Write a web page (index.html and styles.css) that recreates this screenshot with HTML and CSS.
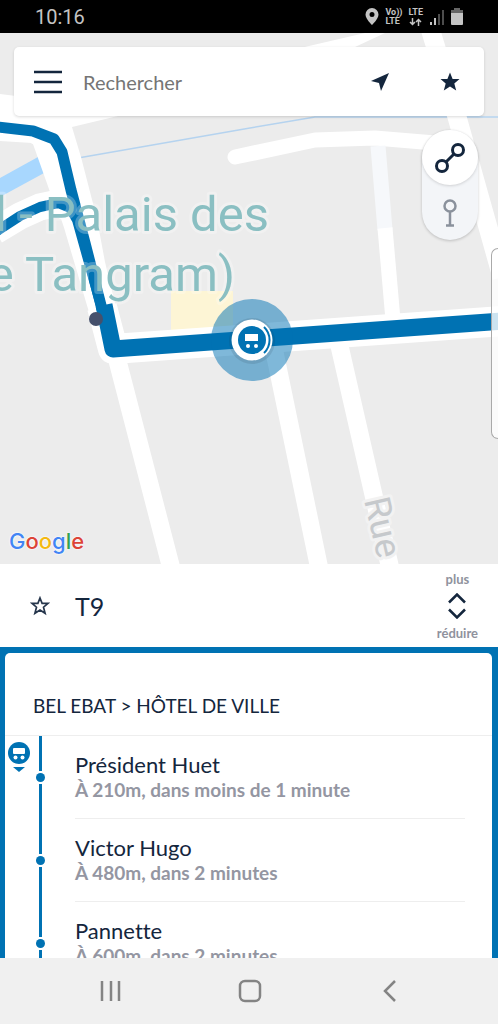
FILE: index.html
```html
<!DOCTYPE html>
<html lang="fr">
<head>
    <meta charset="UTF-8">
    <meta name="viewport" content="width=device-width, initial-scale=1.0">
    <title>Ligne T9</title>
    <link rel="stylesheet" href="styles.css">
</head>
<body>
    <!-- Barre d'état -->
    <div class="status-bar">
        <span class="clock">10:16</span>
        <div class="status-icons">
            <svg width="14" height="17" viewBox="0 0 14 17"><path fill="#c4c4c4" fill-rule="evenodd" d="M7 0a6.500 6.500 0 0 0-6.500 6.500C.5 11 7 17 7 17s6.500-6 6.500-10.500A6.500 6.500 0 0 0 7 0zm0 4a2.500 2.500 0 1 1 0 5 2.500 2.500 0 0 1 0-5z"/></svg>
            <span class="network">Vo))<br>LTE</span>
            <span class="network">LTE
                <svg width="13" height="8" viewBox="0 0 13 8" fill="none" stroke="#c4c4c4" stroke-width="1.500"><path d="M3.500 0v6.500M1 4l2.500 2.500L6 4M9.500 8V1.500M7 4l2.500-2.500L12 4"/></svg>
            </span>
            <svg class="signal" width="16" height="16" viewBox="0 0 16 16"><path fill="#c4c4c4" d="M1 13h2v3H1zM5 9h2v7H5z"/><path fill="#4d4d4d" d="M9 5h2v11H9zM13 1h2v15h-2z"/></svg>
            <svg width="12" height="17" viewBox="0 0 12 17"><path fill="#666" d="M3 0h6v2h3v4H0V2h3z"/><path fill="#c4c4c4" d="M0 5h12v11a1 1 0 0 1-1 1H1a1 1 0 0 1-1-1z"/></svg>
        </div>
    </div>

    <!-- Carte -->
    <main class="map">
        <svg class="map-canvas" viewBox="0 33 498 531" preserveAspectRatio="xMidYMid slice">
            <rect x="-500" y="33" width="1500" height="531" fill="#ececec"/>
            <rect x="171" y="291" width="62" height="50" fill="#fdf5d5"/>
            <path fill="#a8d7fe" d="M0 178l47-26 10 14L0 197z"/>
            <path fill="none" stroke="#b5d3ef" stroke-width="1.500" d="M78 158l172-30 65-11h183"/>
            <!-- rues -->
            <path fill="#fff" d="M0 94l16 2 34 10 315-73h20l-30 14-237 69-46 11 9 30 16 62 8 43 20 83-17 1-20-50-21-74-12-16-22-62-10-7-33-6z"/>
            <g fill="none" stroke="#fff">
                <path stroke-width="20" d="M0 131l33 2 18 8 8 15"/>
                <path stroke-width="27" d="M-5 231l25-15 20-9 18-4 14 6 5 15 26 88"/>
                <path stroke-width="19" d="M429 25l28 92 45 160"/>
                <path stroke-width="15" stroke-linecap="round" stroke-linejoin="round" d="M235 157l80-17 60-2 60 5"/>
                <path stroke="#f6f8fb" stroke-width="15" d="M378 146l7 84"/>
                <path stroke-width="15" d="M385 228l8 92"/>
                <path stroke-width="18" d="M116 355l55 212M272 340l47 227M337 335l53 232"/>
                <path stroke-width="30" stroke-linejoin="round" d="M102 307l11 42 390-28"/>
            </g>
            <!-- tracé de la ligne -->
            <g fill="none" stroke="#0072b3" stroke-linejoin="round">
                <path stroke-width="11" d="M-3 127l36 4 21 8 8 13 9 38 14 53 18 70"/>
                <path stroke-width="10" d="M-3 231l23-15 20-9 18-4 12 5 7 12 26 93"/>
                <path stroke-width="17" d="M104 305l9 44 390-28"/>
            </g>
            <circle cx="96" cy="319" r="7" fill="#45506c"/>
            <g class="place-name">
                <text x="269" y="231" text-anchor="end">l - Palais des</text>
                <text x="235" y="291" text-anchor="end">e Tangram)</text>
            </g>
            <text class="street-name" transform="translate(364 500) rotate(77)">Rue</text>
            <!-- tram -->
            <circle cx="252" cy="340" r="41" fill="#0072b3" fill-opacity=".5"/>
            <circle cx="252" cy="341" r="23" fill="#234" fill-opacity=".12"/>
            <circle cx="252" cy="340" r="20.500" fill="#fff"/>
            <circle cx="252" cy="340" r="14" fill="#0072b3"/>
            <path fill="none" stroke="#0072b3" stroke-width="2" d="M264 327a18 18 0 0 1 0 26"/>
            <path fill="#fff" d="M245 334h13v7h-13z"/>
            <circle cx="248" cy="346" r="2" fill="#fff"/>
            <circle cx="256" cy="346" r="2" fill="#fff"/>
        </svg>

        <form class="search-bar">
            <button type="button" class="menu-btn" aria-label="Menu">
                <svg width="28" height="24" viewBox="0 0 28 24" stroke="#14263d" stroke-width="2.500"><path d="M0 2h28M0 12h28M0 22h28"/></svg>
            </button>
            <input type="text" class="search-input" placeholder="Rechercher" aria-label="Rechercher">
            <button type="button" class="search-btn" aria-label="Ma position">
                <svg width="18" height="18" viewBox="0 0 18 18" fill="#14263d"><path d="M18 0L10 18 8 10 0 8z"/></svg>
            </button>
            <button type="button" class="search-btn" aria-label="Favoris">
                <svg width="20" height="20" viewBox="0 0 20 20" fill="#14263d"><path d="M10 .5l2.600 6.500h6.900l-5.200 4.400 1.900 7.100L10 14.600l-6.200 3.900 1.900-7.100L.5 7h6.900z"/></svg>
            </button>
        </form>

        <div class="view-switch">
            <button type="button" class="view-btn active" aria-label="Lignes">
                <svg width="32" height="32" viewBox="0 0 32 32" fill="none" stroke="#14263d" stroke-width="3"><circle cx="24" cy="8" r="5.500"/><circle cx="8" cy="24" r="5.500"/><path d="M12 20l8-8"/></svg>
            </button>
            <button type="button" class="view-btn" aria-label="Arrêts">
                <svg width="16" height="28" viewBox="0 0 16 28" fill="none" stroke="#8a919c" stroke-width="2.500"><circle cx="8" cy="7" r="5.500"/><path d="M8 12v14M4 26.500h8"/></svg>
            </button>
        </div>

        <div class="edge-handle"></div>

        <a class="google" href="#"><span class="blue">G</span><span class="red">o</span><span class="yellow">o</span><span class="blue">g</span><span class="green">l</span><span class="red">e</span></a>
    </main>

    <!-- Ligne -->
    <header class="line-header">
        <button type="button" class="fav-btn" aria-label="Ajouter aux favoris">
            <svg width="20" height="20" viewBox="0 0 20 20" fill="none" stroke="#26364c" stroke-width="1.700"><path d="M10 2l2.100 5.400h5.900l-4.500 3.800 1.600 6.100-5.100-3.300-5.100 3.300 1.600-6.100L2 7.400h5.900z"/></svg>
        </button>
        <h1>T9</h1>
        <button type="button" class="resize-btn">
            <span>plus</span>
            <svg width="18" height="26" viewBox="0 0 18 26" fill="none" stroke="#14263d" stroke-width="2.500"><path d="M1 9.500l8-8 8 8M1 16.500l8 8 8-8"/></svg>
            <span>réduire</span>
        </button>
    </header>

    <!-- Arrêts -->
    <section class="directions">
        <div class="direction">
            <h2>BEL EBAT &gt; HÔTEL DE VILLE</h2>
            <ul class="stops">
                <li class="stop">
                    <svg class="vehicle" width="22" height="38" viewBox="0 0 22 38">
                        <circle cx="11" cy="11" r="11" fill="#0072b3"/>
                        <rect x="5" y="6" width="12" height="6" rx="1" fill="#fff"/>
                        <circle cx="7.500" cy="15.500" r="2" fill="#fff"/>
                        <circle cx="14.500" cy="15.500" r="2" fill="#fff"/>
                        <path fill="#0072b3" d="M5 25h12l-6 5z"/>
                    </svg>
                    <div class="rail"><i class="rail-top"></i><i class="rail-dot"></i><i class="rail-bottom"></i></div>
                    <div class="stop-info">
                        <h3>Président Huet</h3>
                        <p>À 210m, dans moins de 1 minute</p>
                    </div>
                </li>
                <li class="stop">
                    <div class="rail"><i class="rail-top"></i><i class="rail-dot"></i><i class="rail-bottom"></i></div>
                    <div class="stop-info">
                        <h3>Victor Hugo</h3>
                        <p>À 480m, dans 2 minutes</p>
                    </div>
                </li>
                <li class="stop">
                    <div class="rail"><i class="rail-top"></i><i class="rail-dot"></i><i class="rail-bottom"></i></div>
                    <div class="stop-info">
                        <h3>Pannette</h3>
                        <p>À 600m, dans 2 minutes</p>
                    </div>
                </li>
            </ul>
        </div>
    </section>

    <!-- Navigation Android -->
    <nav class="nav-bar">
        <button type="button" aria-label="Applications récentes">
            <svg width="22" height="22" viewBox="0 0 22 22" stroke="#848484" stroke-width="2.500"><path d="M2 1v20M11 1v20M19 1v20"/></svg>
        </button>
        <button type="button" aria-label="Accueil">
            <svg width="24" height="24" viewBox="0 0 24 24" fill="none" stroke="#848484" stroke-width="2.500"><rect x="2" y="2" width="20" height="20" rx="5"/></svg>
        </button>
        <button type="button" aria-label="Retour">
            <svg width="14" height="22" viewBox="0 0 14 22" fill="none" stroke="#848484" stroke-width="2.500"><path d="M13 1L3 11l10 10"/></svg>
        </button>
    </nav>
</body>
</html>
```

FILE: styles.css
```css
* {
    box-sizing: border-box;
}
body {
    margin: 0;
    height: 100vh;
    display: flex;
    flex-direction: column;
    overflow: hidden;
    font-family: 'Lato', sans-serif;
    font-variant-ligatures: none;
    color: #14263d;
    background-color: white;
}
button {
    display: flex;
    align-items: center;
    justify-content: center;
    padding: 0;
    border: none;
    background: none;
    font-family: inherit;
    color: inherit;
    cursor: pointer;
}
svg {
    display: block;
}
h1, h2, h3, p, ul {
    margin: 0;
    padding: 0;
    font-weight: 400;
}

/* Barre d'état */
.status-bar {
    flex: none;
    height: 33px;
    padding: 0 35px;
    display: flex;
    align-items: center;
    justify-content: space-between;
    background-color: black;
    color: #c4c4c4;
    font-family: 'Roboto', sans-serif;
}
.clock {
    font-size: 20px;
}
.status-icons {
    display: flex;
    align-items: center;
    gap: 6px;
}
.network {
    font-size: 9px;
    line-height: 9px;
    font-weight: 700;
}
.network svg {
    margin: 1px auto 0;
}

/* Carte */
.map {
    flex: 1;
    min-height: 0;
    position: relative;
    overflow: hidden;
    padding: 14px;
}
.map-canvas {
    position: absolute;
    top: 0;
    left: 0;
    width: 100%;
    height: 100%;
}
.place-name {
    font-family: 'Roboto', sans-serif;
    font-size: 49px;
    fill: #8abfc2;
    stroke: rgba(255, 255, 255, 0.25);
    stroke-width: 6px;
    stroke-linejoin: round;
    paint-order: stroke;
}
.street-name {
    font-family: 'Roboto', sans-serif;
    font-size: 36px;
    fill: #c6c9cc;
    stroke: #f2f2f2;
    stroke-width: 6px;
    stroke-linejoin: round;
    paint-order: stroke;
}
.search-bar {
    position: relative;
    height: 69px;
    padding: 0 14px 0 20px;
    display: flex;
    align-items: center;
    background-color: white;
    border-radius: 5px;
    box-shadow: 0 1px 3px rgba(0, 0, 0, 0.15);
}
.search-input {
    flex: 1;
    min-width: 0;
    margin-left: 21px;
    padding: 0;
    border: none;
    outline: none;
    background: none;
    font-family: inherit;
    font-size: 20px;
    color: #14263d;
}
.search-input::placeholder {
    color: #757575;
    opacity: 1;
}
.search-btn {
    width: 40px;
    height: 40px;
    margin-left: 30px;
}
.view-switch {
    position: absolute;
    top: 97px;
    right: 20px;
    background-color: #f3f5f8;
    border-radius: 28px;
    box-shadow: 0 1px 3px rgba(0, 0, 0, 0.2);
}
.view-btn {
    width: 56px;
    height: 55px;
    border-radius: 50%;
}
.view-btn.active {
    background-color: white;
    box-shadow: 0 1px 3px rgba(0, 0, 0, 0.15);
}
.edge-handle {
    position: absolute;
    top: 215px;
    right: 0;
    width: 7px;
    height: 191px;
    background-color: rgba(255, 255, 255, 0.8);
    border: 1px solid #aaa;
    border-right: none;
    border-radius: 7px 0 0 7px;
}
.google {
    position: absolute;
    left: 9px;
    bottom: 9px;
    font-family: 'Inter', sans-serif;
    font-size: 22px;
    line-height: 28px;
    font-weight: 500;
    text-decoration: none;
    text-shadow: 0 0 2px white, 0 0 2px white;
}
.blue {
    color: #4285f4;
}
.red {
    color: #dc4437;
}
.yellow {
    color: #f4b912;
}
.green {
    color: #34a051;
}

/* Ligne */
.line-header {
    flex: none;
    height: 83px;
    padding: 0 20px 0 30px;
    display: flex;
    align-items: center;
}
.line-header h1 {
    flex: 1;
    margin-left: 25px;
    font-size: 25px;
}
.resize-btn {
    flex-direction: column;
    gap: 5px;
    font-size: 13px;
    line-height: 18px;
    font-weight: 700;
    color: #8f929d;
}

/* Arrêts */
.directions {
    flex: none;
    height: 311px;
    padding: 6px 6px 0 5px;
    overflow: hidden;
    background-color: #0072b3;
}
.direction {
    background-color: white;
    border-radius: 5px 5px 0 0;
}
.direction h2 {
    padding: 40px 28px 16px;
    border-bottom: 1px solid #eee;
    font-size: 19px;
    line-height: 26px;
}
.stops {
    list-style: none;
}
.stop {
    position: relative;
    display: flex;
}
.vehicle {
    position: absolute;
    top: 6px;
    left: 3px;
}
.rail {
    width: 70px;
    display: flex;
    flex-direction: column;
    align-items: center;
    gap: 2px;
}
.rail-top,
.rail-bottom {
    width: 3px;
    background-color: #0072b3;
}
.rail-top {
    height: 35px;
}
.rail-bottom {
    flex: 1;
}
.rail-dot {
    width: 9px;
    height: 9px;
    border-radius: 50%;
    background-color: #0072b3;
}
.stop-info {
    flex: 1;
    margin-right: 27px;
    padding: 16px 0;
    border-bottom: 1px solid #eee;
}
.stop-info h3 {
    font-size: 22px;
    line-height: 26px;
}
.stop-info p {
    font-size: 19px;
    line-height: 24px;
    font-weight: 700;
    color: #9496a2;
}

/* Navigation */
.nav-bar {
    flex: none;
    height: 66px;
    padding: 0 39px 0 41px;
    display: flex;
    background-color: #f0f0f0;
}
.nav-bar button {
    flex: 1;
}
```
